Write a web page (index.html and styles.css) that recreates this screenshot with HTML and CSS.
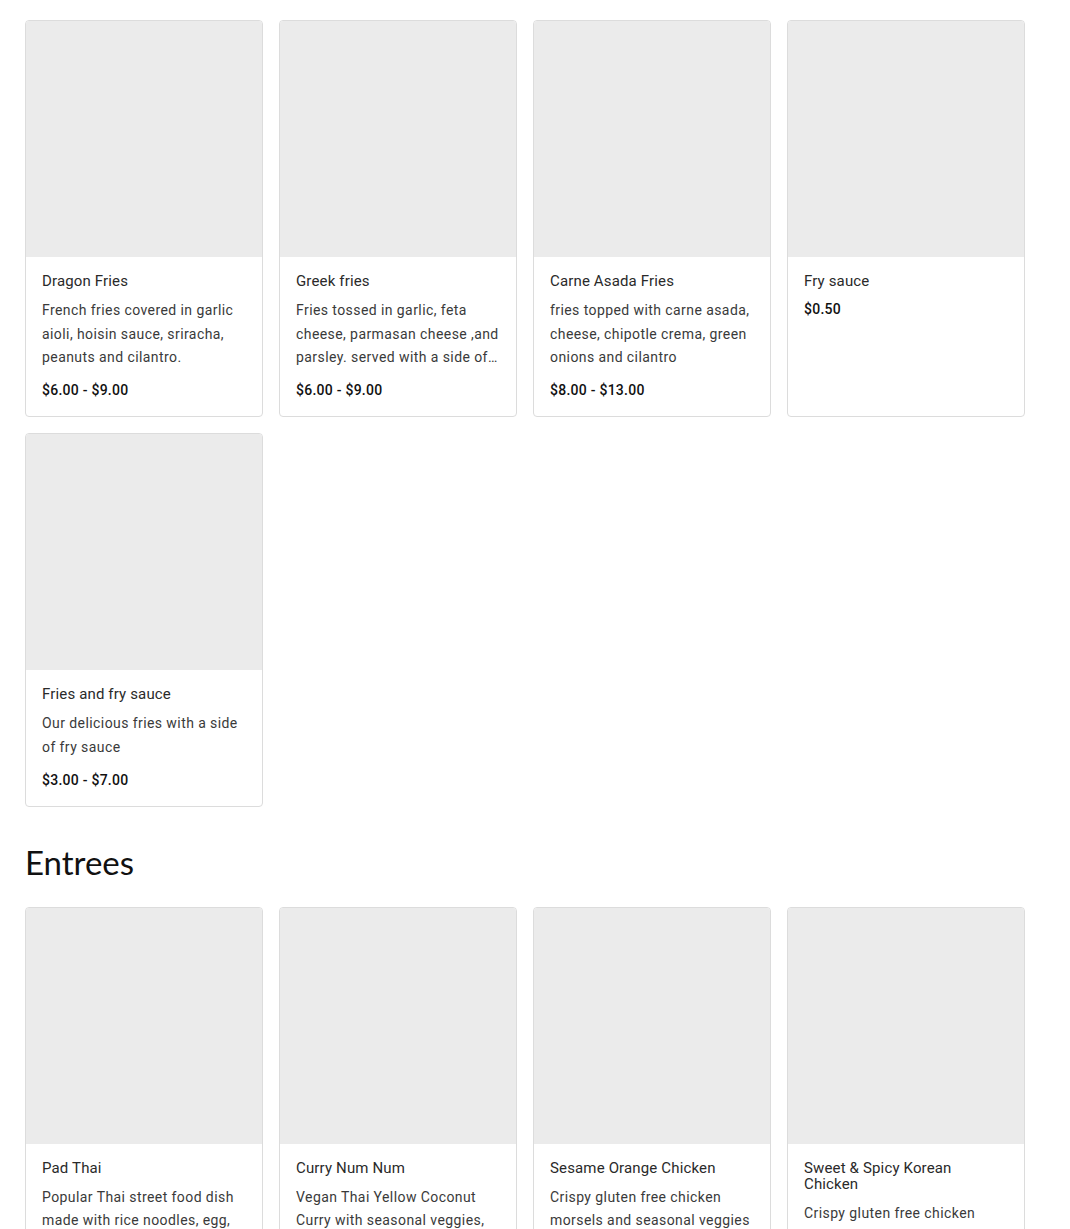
FILE: index.html
```html
<!DOCTYPE html>
<html lang="en">
<head>
<meta charset="utf-8">
<title>Menu</title>
<link rel="stylesheet" href="styles.css">
</head>
<body>
<main class="menu">
  <section class="section">
    <div class="grid">
      <article class="card">
        <div class="card-img"></div>
        <div class="card-body">
          <h3 class="card-title">Dragon Fries</h3>
          <p class="card-desc">French fries covered in garlic aioli, hoisin sauce, sriracha, peanuts and cilantro.</p>
          <p class="card-price">$6.00 - $9.00</p>
        </div>
      </article>
      <article class="card">
        <div class="card-img"></div>
        <div class="card-body">
          <h3 class="card-title">Greek fries</h3>
          <p class="card-desc">Fries tossed in garlic, feta cheese, parmasan cheese ,and parsley. served with a side of tzatziki sauce</p>
          <p class="card-price">$6.00 - $9.00</p>
        </div>
      </article>
      <article class="card">
        <div class="card-img"></div>
        <div class="card-body">
          <h3 class="card-title">Carne Asada Fries</h3>
          <p class="card-desc">fries topped with carne asada, cheese, chipotle crema, green onions and cilantro</p>
          <p class="card-price">$8.00 - $13.00</p>
        </div>
      </article>
      <article class="card">
        <div class="card-img"></div>
        <div class="card-body">
          <h3 class="card-title">Fry sauce</h3>
          <p class="card-price">$0.50</p>
        </div>
      </article>
      <article class="card">
        <div class="card-img"></div>
        <div class="card-body">
          <h3 class="card-title">Fries and fry sauce</h3>
          <p class="card-desc">Our delicious fries with a side of fry sauce</p>
          <p class="card-price">$3.00 - $7.00</p>
        </div>
      </article>
    </div>
  </section>

  <section class="section">
    <h2 class="section-title">Entrees</h2>
    <div class="grid">
      <article class="card">
        <div class="card-img"></div>
        <div class="card-body">
          <h3 class="card-title">Pad Thai</h3>
          <p class="card-desc">Popular Thai street food dish made with rice noodles, egg, tofu, bean sprouts and peanuts</p>
          <p class="card-price">$10.00 - $13.00</p>
        </div>
      </article>
      <article class="card">
        <div class="card-img"></div>
        <div class="card-body">
          <h3 class="card-title">Curry Num Num</h3>
          <p class="card-desc">Vegan Thai Yellow Coconut Curry with seasonal veggies, served over jasmine rice</p>
          <p class="card-price">$10.00 - $13.00</p>
        </div>
      </article>
      <article class="card">
        <div class="card-img"></div>
        <div class="card-body">
          <h3 class="card-title">Sesame Orange Chicken</h3>
          <p class="card-desc">Crispy gluten free chicken morsels and seasonal veggies tossed in sesame orange sauce</p>
          <p class="card-price">$10.00 - $13.00</p>
        </div>
      </article>
      <article class="card">
        <div class="card-img"></div>
        <div class="card-body">
          <h3 class="card-title">Sweet &amp; Spicy Korean Chicken</h3>
          <p class="card-desc">Crispy gluten free chicken tossed in a sweet and spicy Korean sauce</p>
          <p class="card-price">$10.00 - $13.00</p>
        </div>
      </article>
    </div>
  </section>
</main>
</body>
</html>
```

FILE: styles.css
```css
html, body {
  margin: 0;
  padding: 0;
  background: #ffffff;
}

body {
  font-family: Roboto, "Liberation Sans", sans-serif;
  color: #222222;
}

.menu {
  padding: 20px 0 40px 25px;
  width: 1000px;
}

.section + .section {
  margin-top: 35px;
}

.section-title {
  font-family: Lato, "Liberation Sans", sans-serif;
  font-weight: 400;
  font-size: 33px;
  line-height: 40px;
  margin: 0 0 25px 0;
  color: #111111;
}

.grid {
  display: grid;
  grid-template-columns: repeat(4, 238px);
  gap: 16px;
}

.card {
  border: 1px solid #dcdcdc;
  border-radius: 4px;
  overflow: hidden;
  background: #ffffff;
  display: flex;
  flex-direction: column;
}

.card-img {
  height: 236px;
  background: #ebebeb;
}

.card-body {
  padding: 16px;
}

.card-title {
  font-family: Roboto, "Liberation Sans", sans-serif;
  font-weight: 400;
  font-size: 15px;
  line-height: 16px;
  margin: 0 0 10px 0;
  color: #2a2a2a;
  letter-spacing: 0.15px;
}

.card-desc {
  font-family: Roboto, "Liberation Sans", sans-serif;
  font-size: 14px;
  line-height: 23.5px;
  margin: 0 0 10.5px 0;
  color: #3a3a3a;
  display: -webkit-box;
  -webkit-line-clamp: 3;
  -webkit-box-orient: vertical;
  overflow: hidden;
  letter-spacing: 0.42px;
}

.card-price {
  font-family: Roboto, "Liberation Sans", sans-serif;
  font-weight: 500;
  font-size: 14px;
  line-height: 20px;
  margin: 0;
  color: #111111;
  letter-spacing: 0.25px;
}
```
